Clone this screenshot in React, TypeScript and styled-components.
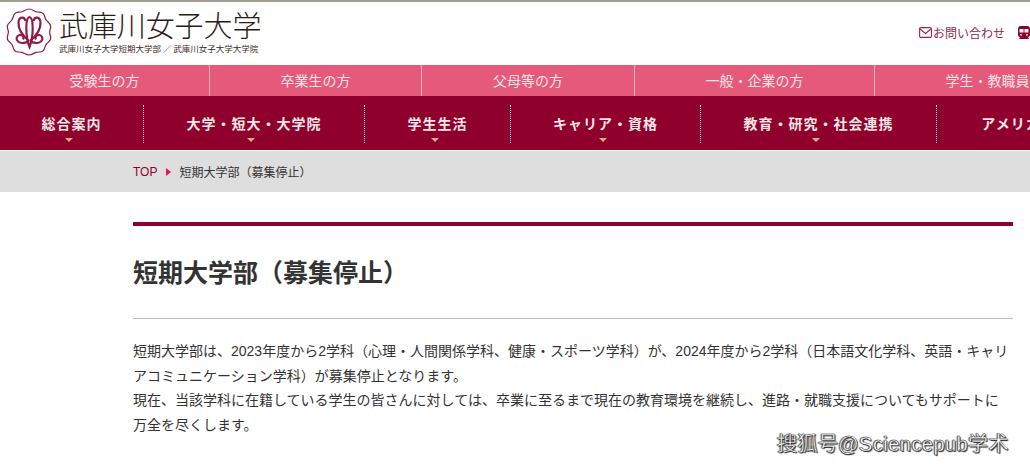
import React from 'react';
import styled, { createGlobalStyle } from 'styled-components';

const GlobalStyle = createGlobalStyle`
  html, body {
    margin: 0;
    padding: 0;
    background: #fff;
    overflow: hidden;
  }
  body {
    font-family: "Liberation Sans", "Noto Sans CJK JP", sans-serif;
    color: #333;
  }
`;

const Page = styled.div`
  width: 1030px;
  height: 464px;
  overflow: hidden;
  position: relative;
`;

const Header = styled.header`
  height: 63px;
  border-top: 2px solid #a39d90;
  display: flex;
  justify-content: space-between;
  background: #fff;
`;

const Brand = styled.a`
  display: flex;
  align-items: flex-start;
  padding: 6px 0 0 5px;
  gap: 6px;
`;

const BrandText = styled.div`
  display: flex;
  flex-direction: column;
`;

const BrandName = styled.div`
  font-family: "Noto Sans CJK JP", sans-serif;
  font-weight: 300;
  font-size: 29px;
  line-height: 33px;
  letter-spacing: -0.1px;
  color: #2a1c16;
  white-space: nowrap;
`;

const BrandSub = styled.div`
  font-family: "Noto Sans CJK JP", sans-serif;
  font-size: 8.5px;
  line-height: 12px;
  margin-top: 1px;
  color: #3a2a24;
  white-space: nowrap;
`;

const HeaderLinks = styled.div`
  display: flex;
  align-items: center;
  gap: 13px;
  padding: 0 0 3px 0;
`;

const ContactLink = styled.a`
  display: flex;
  align-items: center;
  gap: 1px;
  font-size: 12px;
  color: #94284f;
  white-space: nowrap;
`;

const TabBar = styled.nav`
  height: 31px;
  display: flex;
  background: #e55a7a;
`;

const Tab = styled.a<{ $width: number; $last?: boolean }>`
  flex: 0 0 ${p => p.$width}px;
  box-sizing: border-box;
  border-right: ${p => (p.$last ? 'none' : '1px solid #f2b4c2')};
  display: flex;
  align-items: center;
  justify-content: center;
  padding-bottom: 1px;
  font-size: 14px;
  color: #fbe3e8;
  white-space: nowrap;
`;

const MainNav = styled.nav`
  height: 54px;
  box-sizing: border-box;
  padding-top: 9px;
  display: flex;
  background: #8f002d;
`;

const NavItem = styled.a<{ $width: number; $last?: boolean }>`
  flex: 0 0 ${p => p.$width}px;
  box-sizing: border-box;
  height: 38px;
  border-right: ${p => (p.$last ? 'none' : '1px dotted #f0d5d5')};
  position: relative;
  display: flex;
  justify-content: center;
  padding-top: 10px;
  font-size: 14px;
  line-height: 18px;
  font-weight: 700;
  letter-spacing: 1px;
  color: #f6e6e6;
  white-space: nowrap;
`;

const NavCaret = styled.span`
  position: absolute;
  left: 50%;
  bottom: 1px;
  margin-left: -7px;
  border-left: 4px solid transparent;
  border-right: 4px solid transparent;
  border-top: 4px solid #f0a98c;
`;

const Crumbs = styled.div`
  height: 41px;
  margin-top: 1px;
  background: #dedede;
  box-sizing: border-box;
  padding-left: 133px;
  display: flex;
  align-items: center;
  font-size: 12px;
`;

const CrumbLink = styled.a`
  color: #8f002d;
`;

const CrumbArrow = styled.span`
  margin: 0 8px 0 9px;
  border-top: 4px solid transparent;
  border-bottom: 4px solid transparent;
  border-left: 5px solid #e0145e;
`;

const CrumbCurrent = styled.span`
  color: #333;
`;

const Main = styled.main`
  padding: 30px 17px 0 133px;
`;

const Title = styled.h1`
  margin: 0;
  border-top: 4px solid #8f002d;
  border-bottom: 1px solid #bdbdbd;
  padding: 31px 0 29px;
  font-size: 25px;
  line-height: 32px;
  font-weight: 700;
  color: #333;
`;

const Body = styled.p`
  margin: 0;
  max-width: 876px;
  font-size: 14px;
  line-height: 24.6px;
  color: #333;
  &:first-of-type {
    margin-top: 20px;
  }
`;

const Watermark = styled.div`
  position: absolute;
  left: 777px;
  top: 431px;
  font-size: 20px;
  line-height: 26px;
  letter-spacing: 0.45px;
  color: #fff;
  white-space: nowrap;
  -webkit-text-stroke: 0.3px #222;
  text-shadow: 1px 1px 1px #222, -1px 0 1px #555;
`;

const LogoMark = () => (
  <svg width="48" height="48" viewBox="0 0 48 48" fill="none" stroke="#8f1c45">
    <path
      strokeWidth="1.200"
      d="M24 1c3 0 4.500 2 7 2.800s5-.2 7 1.600 1.600 4.200 3 6.400 4 3.200 4.600 6-1 4-1 6.200 1.600 4.400 1 7-3.200 3.400-4.600 5.600-1 4.800-3 6.400-4.400.6-7 1.400-4.200 2.600-7 2.600-4.500-1.800-7-2.600-5 .2-7-1.400-1.600-4.200-3-6.400-4-3-4.600-5.600 1-4.800 1-7-1.600-3.600-1-6.200 3.200-3.800 4.600-6 1-4.600 3-6.400 4.500-.8 7-1.600 4-2.800 7-2.800z"
    />
    <g strokeWidth="2.200">
      <path d="M24.500 39C20.500 29 20 10 24.500 9c4.500 1 4 20 0 30z" />
      <path d="M24 33C18 28 13 22 13.500 14.500 14 8.500 19.500 8 20.500 13" />
      <path d="M25 33c6-5 11-11 10.500-18.500C35 8.500 29.500 8 28.500 13" />
      <path d="M24 33c-3 2-8 3-11 .5-2.500-2-1.500-6 1.500-6.500 3-.5 5 2 3.500 4.500" />
      <path d="M25 33c3 2 8 3 11 .5 2.500-2 1.500-6-1.500-6.500-3-.5-5 2-3.500 4.500" />
    </g>
  </svg>
);

const MailIcon = () => (
  <svg width="13" height="11" viewBox="0 0 13 11" fill="none" stroke="#94284f" strokeWidth="1.100">
    <rect x="0.600" y="0.600" width="11.800" height="9.800" rx="1.200" />
    <path d="M1 2l5.500 4.500L12 2" />
  </svg>
);

const TrainIcon = () => (
  <svg width="12" height="13" viewBox="0 0 12 13" fill="#8f002d">
    <path d="M3 0h6a3 3 0 0 1 3 3v6a2 2 0 0 1-2 2l1 2H1l1-2a2 2 0 0 1-2-2V3a3 3 0 0 1 3-3z" />
    <rect x="1.500" y="3" width="4" height="3.500" fill="#fff" />
    <rect x="6.500" y="3" width="4" height="3.500" fill="#fff" />
    <circle cx="3" cy="8.800" r="0.900" fill="#fff" />
    <circle cx="9" cy="8.800" r="0.900" fill="#fff" />
  </svg>
);

const tabs = [
  { label: '受験生の方', width: 210 },
  { label: '卒業生の方', width: 212 },
  { label: '父母等の方', width: 213 },
  { label: '一般・企業の方', width: 240 },
  { label: '学生・教職員', width: 225, last: true },
];

const navItems = [
  { label: '総合案内', width: 144, caret: true },
  { label: '大学・短大・大学院', width: 221, caret: true },
  { label: '学生生活', width: 146, caret: true },
  { label: 'キャリア・資格', width: 190, caret: true },
  { label: '教育・研究・社会連携', width: 236, caret: true },
  { label: 'アメリカ分校', width: 178, last: true },
];

export default function App() {
  return (
    <Page>
      <GlobalStyle />
      <Header>
        <Brand>
          <LogoMark />
          <BrandText>
            <BrandName>武庫川女子大学</BrandName>
            <BrandSub>武庫川女子大学短期大学部 ／ 武庫川女子大学大学院</BrandSub>
          </BrandText>
        </Brand>
        <HeaderLinks>
          <ContactLink>
            <MailIcon />
            お問い合わせ
          </ContactLink>
          <TrainIcon />
        </HeaderLinks>
      </Header>
      <TabBar>
        {tabs.map(t => (
          <Tab key={t.label} $width={t.width} $last={t.last}>
            {t.label}
          </Tab>
        ))}
      </TabBar>
      <MainNav>
        {navItems.map(n => (
          <NavItem key={n.label} $width={n.width} $last={n.last}>
            {n.label}
            {n.caret && <NavCaret />}
          </NavItem>
        ))}
      </MainNav>
      <Crumbs>
        <CrumbLink>TOP</CrumbLink>
        <CrumbArrow />
        <CrumbCurrent>短期大学部（募集停止）</CrumbCurrent>
      </Crumbs>
      <Main>
        <Title>短期大学部（募集停止）</Title>
        <Body>
          短期大学部は、2023年度から2学科（心理・人間関係学科、健康・スポーツ学科）が、2024年度から2学科（日本語文化学科、英語・キャリアコミュニケーション学科）が募集停止となります。
        </Body>
        <Body>
          現在、当該学科に在籍している学生の皆さんに対しては、卒業に至るまで現在の教育環境を継続し、進路・就職支援についてもサポートに万全を尽くします。
        </Body>
      </Main>
      <Watermark>搜狐号@Sciencepub学术</Watermark>
    </Page>
  );
}
